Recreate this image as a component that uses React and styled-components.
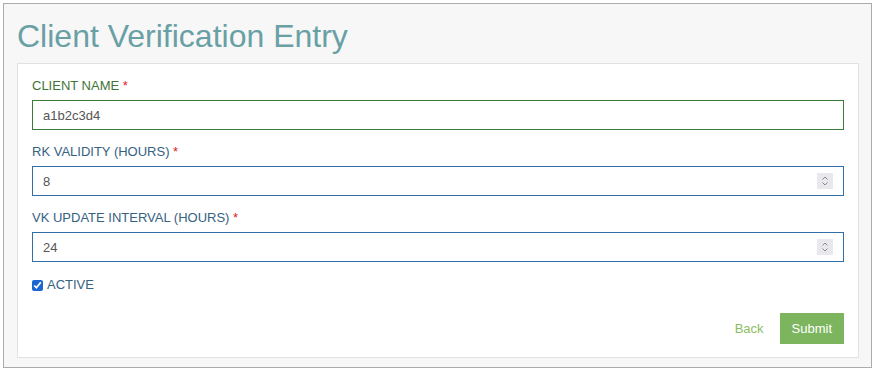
import React, { Component } from "react";
import styled, { createGlobalStyle } from "styled-components";

const GlobalStyle = createGlobalStyle`
    body {
        margin: 0;
        font-family: "Liberation Sans", Arial, sans-serif;
        background: #ffffff;
    }
`

const Page = styled.div`
    box-sizing: border-box;
    width: 869px;
    height: 365px;
    margin: 3px;
    padding: 14px 12px 0 13px;
    background: #f7f7f7;
    border: 1px solid #ababab;
`

const Title = styled.h1`
    margin: 0 0 9px;
    font-size: 32px;
    line-height: 36px;
    font-weight: normal;
    color: #69a0a5;
`

const Card = styled.div`
    box-sizing: border-box;
    width: 842px;
    height: 295px;
    padding: 13px 14px;
    background: #ffffff;
    border: 1px solid #e2e2e2;
    display: flex;
    flex-direction: column;
`

const Group = styled.div`
    margin-bottom: 13px;
`

const Label = styled.label`
    display: block;
    margin-bottom: 5px;
    font-size: 13px;
    line-height: 18px;
    color: ${props => (props.success ? "#3f7437" : "#36617f")};
`

const Star = styled.span`
    color: #e0201f;
`

const InputWrap = styled.div`
    position: relative;
`

const Input = styled.input`
    box-sizing: border-box;
    display: block;
    width: 100%;
    height: 30px;
    padding: 0 10px;
    margin: 0;
    font-family: inherit;
    font-size: 13px;
    color: #555555;
    background: #ffffff;
    border: 1px solid ${props => (props.success ? "#3c7a3c" : "#2f6ea6")};
    border-radius: 0;
    outline: none;
    appearance: textfield;

    &::-webkit-inner-spin-button,
    &::-webkit-outer-spin-button {
        -webkit-appearance: none;
        margin: 0;
    }
`

const Spinner = styled.span`
    position: absolute;
    right: 11px;
    top: 7px;
    width: 16px;
    height: 16px;
    display: flex;
    pointer-events: none;
`

const CheckRow = styled.label`
    display: flex;
    align-items: center;
    gap: 4px;
    margin-top: 1px;
    font-size: 13px;
    line-height: 18px;
    color: #36617f;
`

const CheckBox = styled.input`
    width: 11px;
    height: 11px;
    margin: 0;
    accent-color: #1a66d2;
`

const Actions = styled.div`
    display: flex;
    justify-content: flex-end;
    align-items: center;
    gap: 16px;
    margin-top: auto;
`

const BackLink = styled.a`
    font-size: 13px;
    color: #8dbd62;
    text-decoration: none;
`

const SubmitButton = styled.button`
    height: 31px;
    padding: 0 12px;
    font-family: inherit;
    font-size: 13px;
    color: #ffffff;
    background: #7cb55e;
    border: none;
    border-radius: 0;
`

const SpinIcon = () => (
    <svg width="16" height="16" viewBox="0 0 16 16">
        <rect width="16" height="16" fill="#e9e9ed" />
        <path d="M5.5 6.5 L8 4 L10.5 6.5" fill="none" stroke="#8a8a8a" strokeWidth="1" />
        <path d="M5.5 9.5 L8 12 L10.5 9.5" fill="none" stroke="#8a8a8a" strokeWidth="1" />
    </svg>
)

class App extends Component {
    constructor(props) {
        super(props)

        this.state = {
            name: 'a1b2c3d4',
            rkValidity: '8',
            vkInterval: '24',
            active: true,
        }
    }

    handleChangeName = event => {
        this.setState({ name: event.target.value })
    }

    handleChangeRk = event => {
        this.setState({ rkValidity: event.target.value })
    }

    handleChangeVk = event => {
        this.setState({ vkInterval: event.target.value })
    }

    handleChangeActive = event => {
        this.setState({ active: event.target.checked })
    }

    render() {
        const { name, rkValidity, vkInterval, active } = this.state
        return (
            <Page>
                <GlobalStyle />
                <Title>Client Verification Entry</Title>

                <Card>
                    <Group>
                        <Label success>CLIENT NAME <Star>*</Star></Label>
                        <Input success type="text" value={name} onChange={this.handleChangeName} />
                    </Group>

                    <Group>
                        <Label>RK VALIDITY (HOURS) <Star>*</Star></Label>
                        <InputWrap>
                            <Input type="number" value={rkValidity} onChange={this.handleChangeRk} />
                            <Spinner><SpinIcon /></Spinner>
                        </InputWrap>
                    </Group>

                    <Group>
                        <Label>VK UPDATE INTERVAL (HOURS) <Star>*</Star></Label>
                        <InputWrap>
                            <Input type="number" value={vkInterval} onChange={this.handleChangeVk} />
                            <Spinner><SpinIcon /></Spinner>
                        </InputWrap>
                    </Group>

                    <CheckRow>
                        <CheckBox type="checkbox" checked={active} onChange={this.handleChangeActive} />
                        ACTIVE
                    </CheckRow>

                    <Actions>
                        <BackLink href="#">Back</BackLink>
                        <SubmitButton>Submit</SubmitButton>
                    </Actions>
                </Card>
            </Page>
        )
    }
}

export default App;
